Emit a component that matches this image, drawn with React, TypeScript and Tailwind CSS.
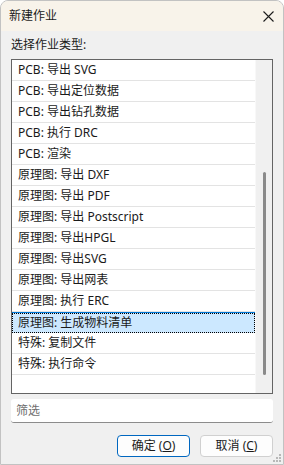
import React from 'react';

const rows = [
  'PCB: 导出 SVG',
  'PCB: 导出定位数据',
  'PCB: 导出钻孔数据',
  'PCB: 执行 DRC',
  'PCB: 渲染',
  '原理图: 导出 DXF',
  '原理图: 导出 PDF',
  '原理图: 导出 Postscript',
  '原理图: 导出HPGL',
  '原理图: 导出SVG',
  '原理图: 导出网表',
  '原理图: 执行 ERC',
  '原理图: 生成物料清单',
  '特殊: 复制文件',
  '特殊: 执行命令',
];

const selected = 12;

const font = { fontFamily: '"Noto Sans", "Noto Sans CJK SC", sans-serif' };

export default function App() {
  return (
    <div
      className="relative w-[284px] h-[465px] bg-[#f0f0f0] border border-[#c2c2c2] rounded-t-[8px] overflow-hidden text-[12px] text-[#1a1a1a] flex flex-col"
      style={font}
    >
      {/* title bar */}
      <div className="h-[30px] shrink-0 bg-[#f8f3ea] flex items-center justify-between pl-[8px] pr-[9px]">
        <span className="leading-[16px]">新建作业</span>
        <svg width="11" height="11" viewBox="0 0 11 11">
          <path d="M0.5 0.5 L10.5 10.5 M10.5 0.5 L0.5 10.5" stroke="#1c1c1c" strokeWidth="1.1" />
        </svg>
      </div>

      <div className="px-[10px] flex flex-col">
        <div className="mt-[4px] h-[20px] leading-[20px]">选择作业类型:</div>

        {/* list */}
        <div className="mt-[4px] h-[335px] bg-white border border-[#646464] flex">
          <div className="flex-1 flex flex-col">
            {rows.map((r, i) =>
              i === selected ? (
                <div key={r} className="h-[21px] border-t border-[#0078d7] bg-[#cce8ff]">
                  <div className="h-[20px] leading-[18px] border border-dotted border-black pl-[5px]">{r}</div>
                </div>
              ) : (
                <div key={r} className="h-[21px] leading-[20px] border-b border-[#e3e3e3] pl-[6px]">
                  {r}
                </div>
              )
            )}
          </div>
          <div className="w-[17px] bg-[#f0f0f0] border-l border-[#f8f8f8] flex justify-center pt-[112px] pl-[1px]">
            <div className="w-[3px] h-[203px] bg-[#8a8a8a] rounded-full" />
          </div>
        </div>

        {/* filter */}
        <div className="mt-[5px] h-[24px] bg-white border-b border-[#8c8c8c] rounded-[3px] flex items-center pl-[5px] text-[#6e6e6e]">
          筛选
        </div>

        {/* buttons */}
        <div className="mt-[12px] flex justify-end gap-[10px]">
          <button className="w-[73px] h-[22px] bg-[#fdfdfd] border border-[#0067c0] rounded-[4px] leading-[18px] text-[#1a1a1a]">
            确定 (<span className="underline">O</span>)
          </button>
          <button className="w-[73px] h-[22px] bg-[#fdfdfd] border border-[#d0d0d0] rounded-[4px] leading-[18px] text-[#1a1a1a]">
            取消 (<span className="underline">C</span>)
          </button>
        </div>
      </div>

      {/* size grip */}
      <svg className="absolute right-[1px] bottom-[1px]" width="10" height="10" viewBox="0 0 10 10">
        <rect x="7" y="1" width="2" height="2" fill="#b8b8b8" />
        <rect x="4" y="4" width="2" height="2" fill="#b8b8b8" />
        <rect x="7" y="4" width="2" height="2" fill="#b8b8b8" />
        <rect x="1" y="7" width="2" height="2" fill="#b8b8b8" />
        <rect x="4" y="7" width="2" height="2" fill="#b8b8b8" />
        <rect x="7" y="7" width="2" height="2" fill="#b8b8b8" />
      </svg>
    </div>
  );
}
